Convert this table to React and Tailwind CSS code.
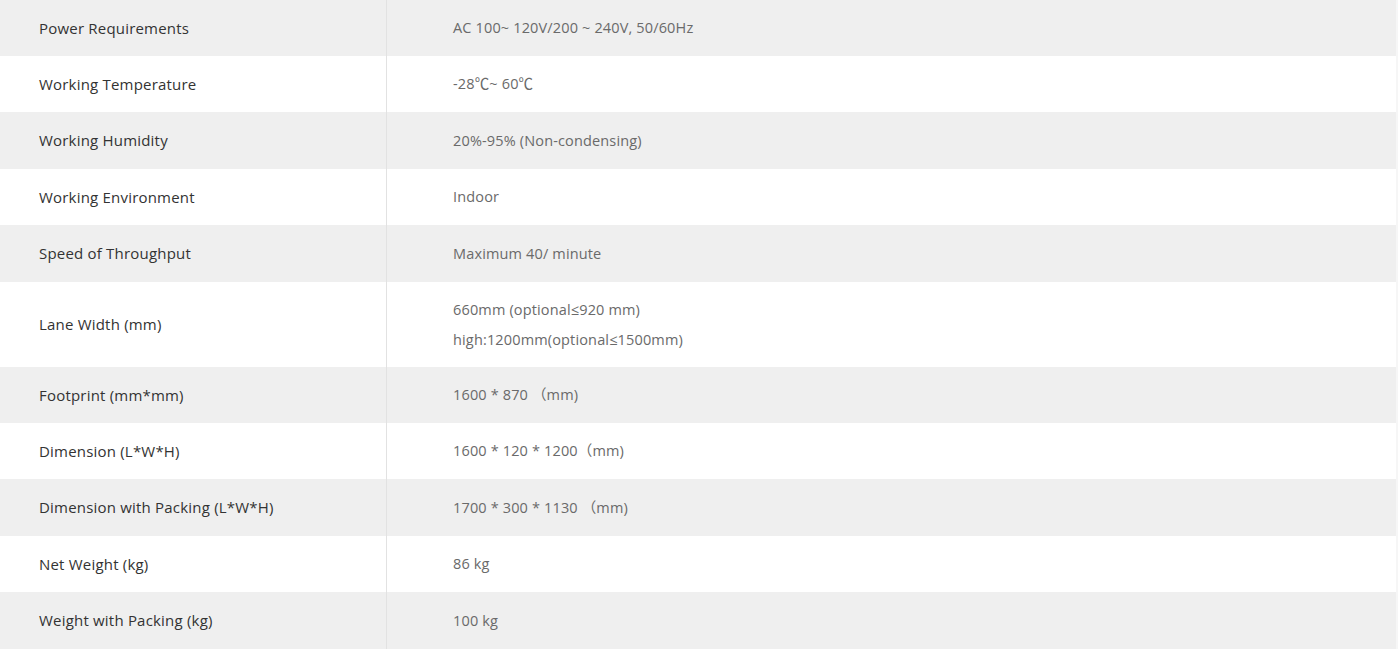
import React from "react";

const rows = [
  { label: "Power Requirements", value: ["AC 100~ 120V/200 ~ 240V, 50/60Hz"], h: "h-[56px]" },
  { label: "Working Temperature", value: ["-28℃~ 60℃"], h: "h-[56px]" },
  { label: "Working Humidity", value: ["20%-95% (Non-condensing)"], h: "h-[57px]" },
  { label: "Working Environment", value: ["Indoor"], h: "h-[56px]" },
  { label: "Speed of Throughput", value: ["Maximum 40/ minute"], h: "h-[57px]" },
  { label: "Lane Width (mm)", value: ["660mm (optional≤920 mm)", "high:1200mm(optional≤1500mm)"], h: "h-[85px]" },
  { label: "Footprint (mm*mm)", value: ["1600 * 870 （mm)"], h: "h-[56px]" },
  { label: "Dimension (L*W*H)", value: ["1600 * 120 * 1200（mm)"], h: "h-[56px]" },
  { label: "Dimension with Packing (L*W*H)", value: ["1700 * 300 * 1130 （mm)"], h: "h-[57px]" },
  { label: "Net Weight (kg)", value: ["86 kg"], h: "h-[56px]" },
  { label: "Weight with Packing (kg)", value: ["100 kg"], h: "h-[57px]" },
];

export default function App() {
  return (
    <div className="w-[1400px] h-[649px] overflow-hidden bg-white" style={{ fontFamily: '"Open Sans", "Noto Sans CJK SC", sans-serif' }}>
      <div className="w-[1398px] border-r-2 border-[#f6f6f6]">
        {rows.map((r, i) => (
          <div key={i} className={`flex ${r.h} ${i % 2 === 0 ? "bg-[#efefef]" : "bg-white"}`}>
            <div className="w-[387px] shrink-0 border-r border-[#e2e2e2] flex items-center pl-[39px] text-[15px] tracking-[0.2px] text-[#333333]">
              {r.label}
            </div>
            <div className="flex flex-col justify-center pl-[66px] text-[14.5px] tracking-[0.15px] text-[#6a6a6a] leading-[30px]">
              {r.value.map((v, j) => (
                <div key={j}>{v}</div>
              ))}
            </div>
          </div>
        ))}
      </div>
    </div>
  );
}
